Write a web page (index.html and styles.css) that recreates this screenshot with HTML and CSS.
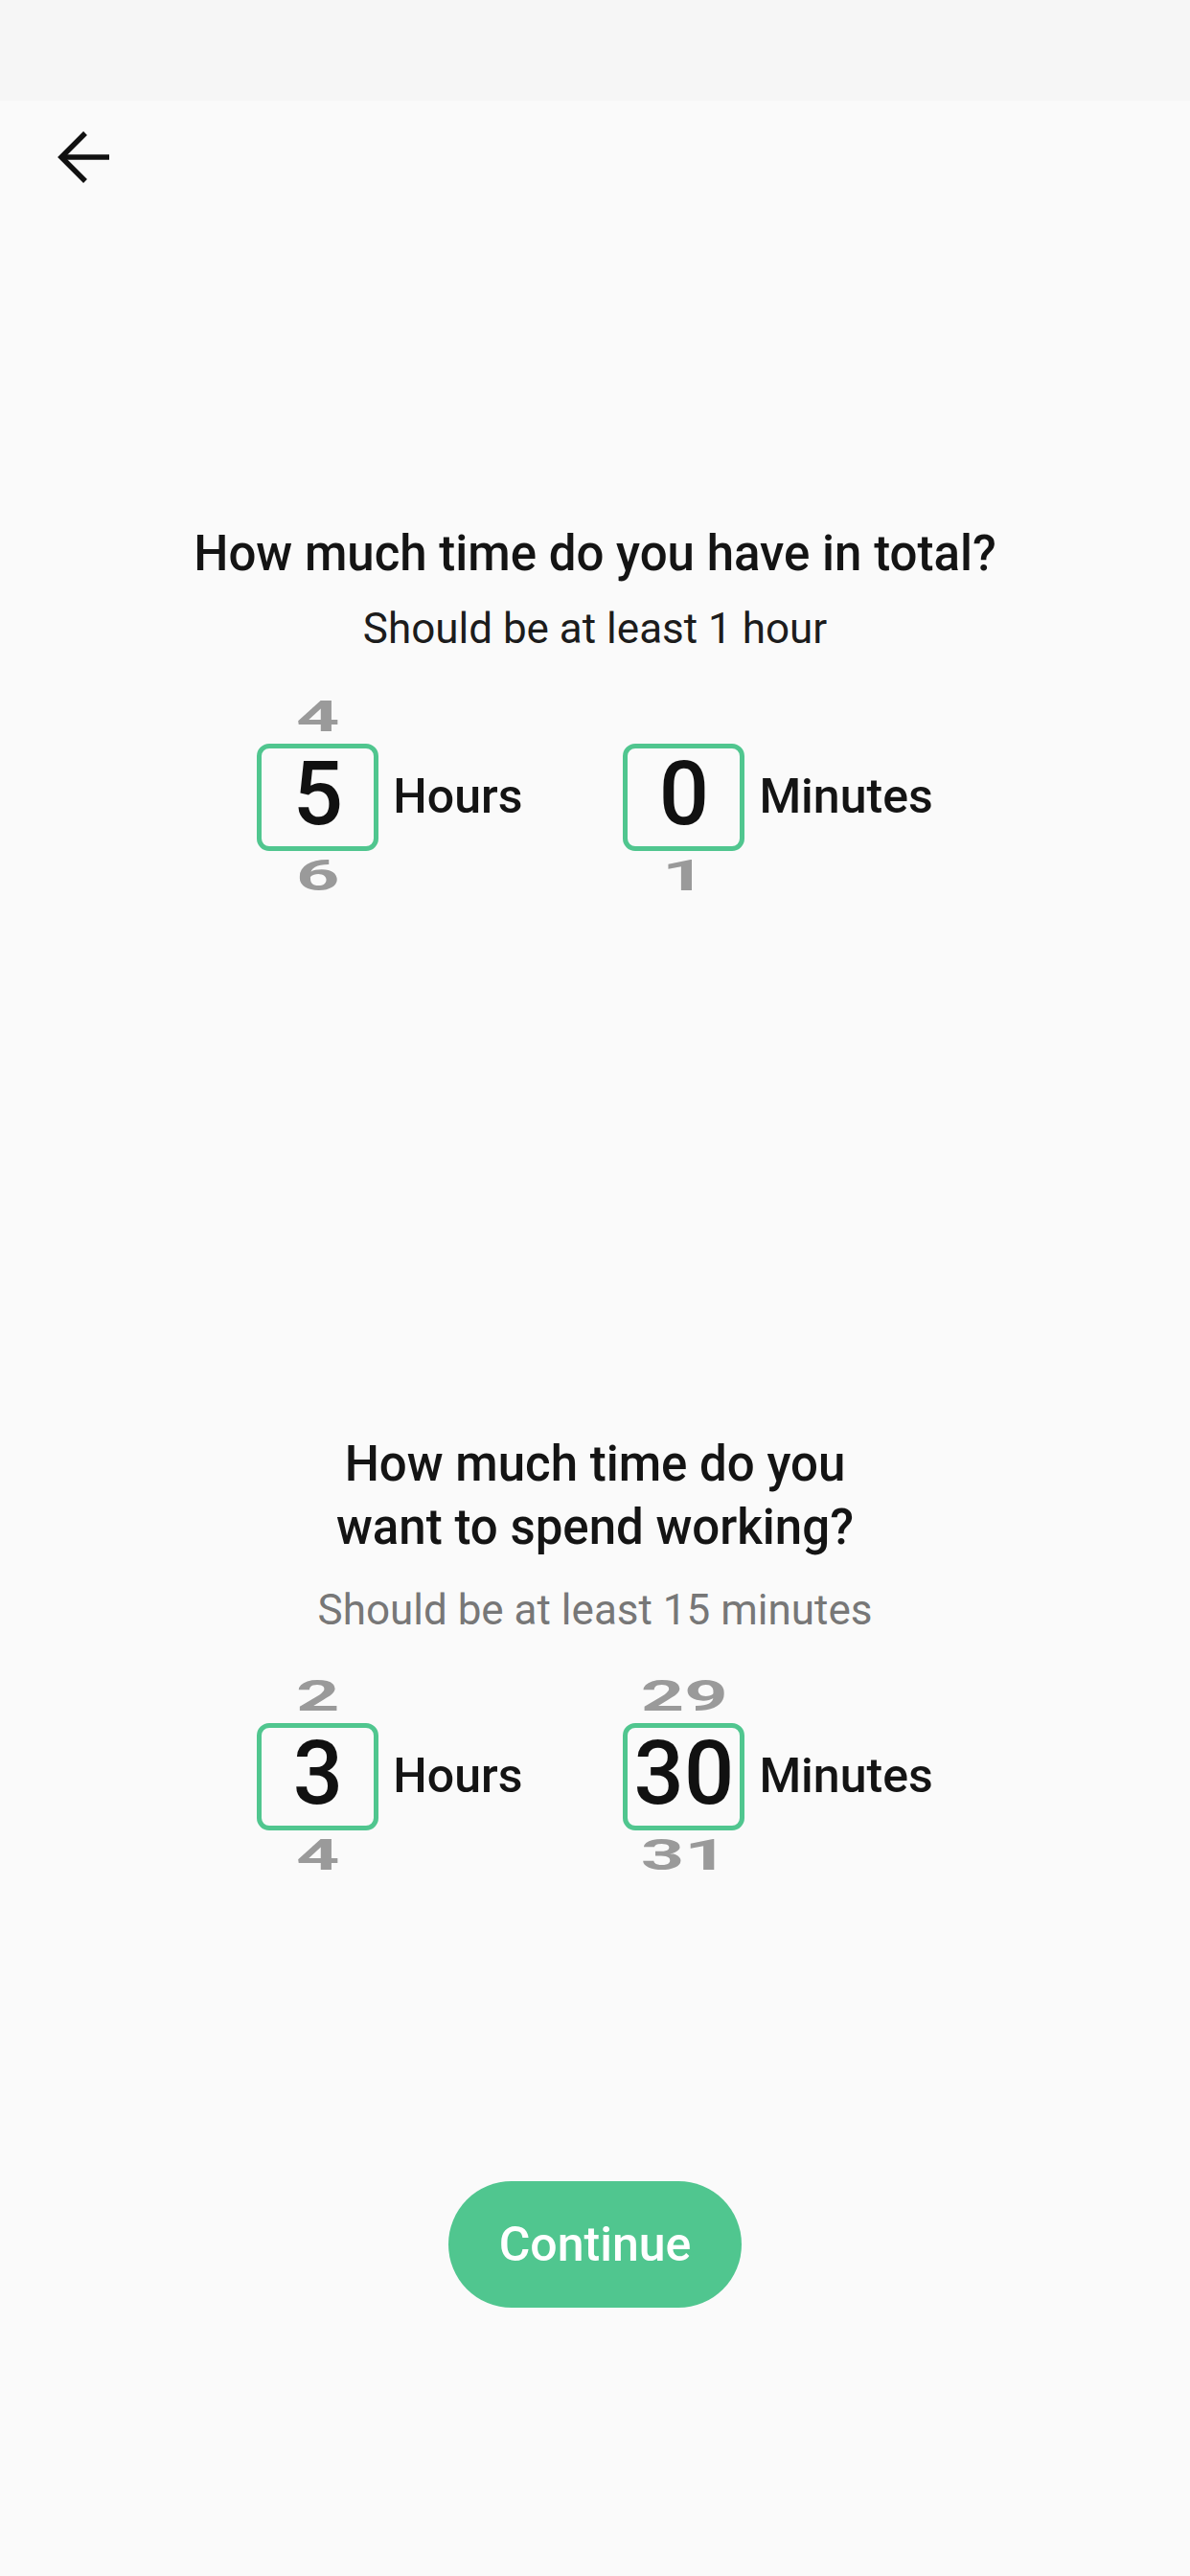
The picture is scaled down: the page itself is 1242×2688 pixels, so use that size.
FILE: index.html
```html
<!DOCTYPE html>
<html lang="en">
<head>
    <meta charset="UTF-8">
    <meta name="viewport" content="width=device-width, initial-scale=1.0">
    <title>Time setup</title>
    <link rel="stylesheet" href="styles.css">
</head>
<body>
    <div class="status-bar"></div>

    <div class="toolbar">
        <button class="back-btn" aria-label="Back">
            <svg width="76" height="76" viewBox="0 0 76 76">
                <path d="M64 38H14" stroke="#111" stroke-width="5.5" fill="none"/>
                <path d="M39 13L14 38L39 63" stroke="#111" stroke-width="5.5" fill="none" stroke-linejoin="miter"/>
            </svg>
        </button>
    </div>

    <section class="question question-total">
        <h2 class="question-title">How much time do you have in total?</h2>
        <p class="question-hint">Should be at least 1 hour</p>
        <div class="pickers">
            <div class="picker">
                <div class="wheel">
                    <span class="near">4</span>
                    <div class="box">5</div>
                    <span class="near">6</span>
                </div>
                <span class="unit">Hours</span>
            </div>
            <div class="picker">
                <div class="wheel">
                    <span class="near">&nbsp;</span>
                    <div class="box">0</div>
                    <span class="near">1</span>
                </div>
                <span class="unit">Minutes</span>
            </div>
        </div>
    </section>

    <section class="question question-work">
        <h2 class="question-title narrow">How much time do you want to spend working?</h2>
        <p class="question-hint muted">Should be at least 15 minutes</p>
        <div class="pickers">
            <div class="picker">
                <div class="wheel">
                    <span class="near">2</span>
                    <div class="box">3</div>
                    <span class="near">4</span>
                </div>
                <span class="unit">Hours</span>
            </div>
            <div class="picker">
                <div class="wheel">
                    <span class="near">29</span>
                    <div class="box">30</div>
                    <span class="near">31</span>
                </div>
                <span class="unit">Minutes</span>
            </div>
        </div>
    </section>

    <div class="actions">
        <button class="continue-btn">Continue</button>
    </div>
</body>
</html>
```

FILE: styles.css
```css
body {
    margin: 0;
    width: 1242px;
    height: 2688px;
    overflow: hidden;
    background-color: #fafafa;
    color: #141414;
    font-family: Roboto, "Liberation Sans", sans-serif;
}
.status-bar {
    height: 105px;
    background-color: #f6f6f6;
}
.toolbar {
    height: 126px;
    padding: 21px 0 0 50px;
    box-sizing: border-box;
}
.back-btn {
    display: block;
    padding: 0;
    border: none;
    background: none;
    width: 76px;
    height: 76px;
}
.back-btn svg {
    display: block;
}
.question {
    display: flex;
    flex-direction: column;
    align-items: center;
    text-align: center;
}
.question-total {
    margin-top: 314px;
}
.question-work {
    margin-top: 561px;
}
.question-title {
    margin: 0;
    font-size: 51px;
    font-weight: 500;
    line-height: 66px;
}
.question-title.narrow {
    max-width: 600px;
}
.question-hint {
    margin: 19px 0 0;
    font-size: 44px;
    line-height: 52px;
    color: #1c1c1c;
}
.question-work .question-hint {
    margin-top: 27px;
}
.question-hint.muted {
    color: #777;
}
.pickers {
    display: flex;
    justify-content: center;
    gap: 105px;
    margin-top: 46px;
}
.question-work .pickers {
    margin-top: 44px;
}
.picker {
    display: flex;
    align-items: center;
    gap: 15px;
}
.wheel {
    display: flex;
    flex-direction: column;
    align-items: center;
}
.near {
    display: block;
    height: 40px;
    font-size: 44px;
    font-weight: 700;
    line-height: 40px;
    color: #9a9a9a;
    transform: scaleX(1.8);
}
.box {
    width: 127px;
    height: 112px;
    box-sizing: border-box;
    margin: 8px 0 6px;
    padding-bottom: 8px;
    border: 5px solid #50c68f;
    border-radius: 13px;
    display: flex;
    align-items: center;
    justify-content: center;
    font-size: 92px;
    font-weight: 500;
    color: #111;
}
.unit {
    font-size: 50px;
    font-weight: 500;
}
.actions {
    display: flex;
    justify-content: center;
    margin-top: 320px;
}
.continue-btn {
    width: 306px;
    height: 132px;
    border: none;
    border-radius: 66px;
    background-color: #50c68f;
    color: #fff;
    font-family: Roboto, "Liberation Sans", sans-serif;
    font-size: 50px;
    font-weight: 500;
}
```
